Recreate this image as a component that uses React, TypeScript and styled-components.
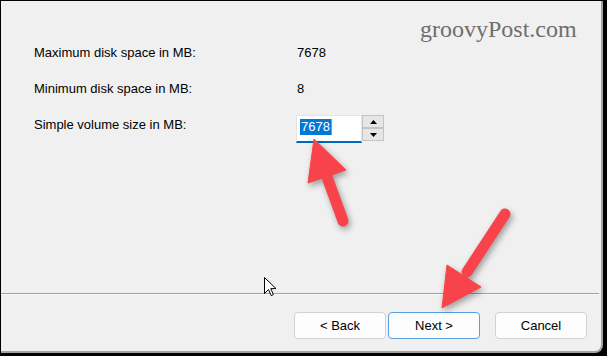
/* Partition wizard page: volume size step, with tutorial arrows on top */
import React from "react";
import styled, { createGlobalStyle } from "styled-components";

interface SizeRowProps {
  label: string;
  value: string;
}

const GlobalStyle = createGlobalStyle`
  html, body {
    margin: 0;
    padding: 0;
    background: #000;
  }
  body {
    font-family: "Liberation Sans", Arial, sans-serif;
  }
`;

const SizeRow: React.FC<SizeRowProps> = ({ label, value }) => (
  <Row>
    <Label>{label}</Label>
    <Value>{value}</Value>
  </Row>
);

const App: React.FC = () => {
  return (
    <Page>
      <GlobalStyle />
      <Dialog>
        <Watermark>groovyPost.com</Watermark>
        <Content>
          <SizeRow label="Maximum disk space in MB:" value="7678" />
          <SizeRow label="Minimum disk space in MB:" value="8" />
          <Row>
            <Label>Simple volume size in MB:</Label>
            <SpinField>
              <TextBox>
                <Selected>7678</Selected>
              </TextBox>
              <Spinner>
                <SpinButton>
                  <svg width="7" height="4" viewBox="0 0 7 4">
                    <path d="M0 4 L3.5 0 L7 4 Z" fill="#000" />
                  </svg>
                </SpinButton>
                <SpinButton>
                  <svg width="7" height="4" viewBox="0 0 7 4">
                    <path d="M0 0 L3.5 4 L7 0 Z" fill="#000" />
                  </svg>
                </SpinButton>
              </Spinner>
            </SpinField>
          </Row>
        </Content>
        <Separator />
        <Footer>
          <WizardButton>&lt; Back</WizardButton>
          <WizardButton primary>Next &gt;</WizardButton>
          <WizardButton gap={13}>Cancel</WizardButton>
        </Footer>
      </Dialog>

      {/* annotation arrows drawn over the screenshot */}
      <Annotations width="607" height="356" viewBox="0 0 607 356">
        <g fill="#f9434a" stroke="#f9434a">
          <line x1="343" y1="221" x2="327" y2="177" strokeWidth="11" strokeLinecap="round" />
          <polygon points="314,139 308,183 346,170" strokeWidth="1" strokeLinejoin="round" />
          <line x1="505" y1="214" x2="467" y2="272" strokeWidth="11" strokeLinecap="round" />
          <polygon points="442,308 447,265 481,287" strokeWidth="1" strokeLinejoin="round" />
        </g>
      </Annotations>

      <Cursor width="13" height="20" viewBox="0 0 13 20">
        <path
          d="M0.5 0.5 L0.5 16.5 L4.5 12.5 L7.2 18.6 L9.4 17.6 L6.8 11.6 L12 11.6 Z"
          fill="#fff"
          stroke="#000"
          strokeWidth="1"
          strokeLinejoin="miter"
        />
      </Cursor>
    </Page>
  );
};

const Page = styled.div`
  position: relative;
  width: 607px;
  height: 356px;
  overflow: hidden;
  background: #000;
`;

const Dialog = styled.div`
  position: relative;
  box-sizing: border-box;
  margin: 1px 0 0 1px;
  width: 602px;
  height: 352px;
  background: #f0f0f0;
  border-right: 2px solid #a3a3a3;
  border-bottom: 2px solid #a3a3a3;
  border-bottom-right-radius: 8px;
  display: flex;
  flex-direction: column;
`;

const Watermark = styled.div`
  position: absolute;
  top: 15px;
  left: 419px;
  font-family: "Liberation Serif", "Times New Roman", serif;
  font-size: 24px;
  color: #6e6e6e;
  white-space: nowrap;
`;

const Content = styled.div`
  box-sizing: border-box;
  height: 292px;
  padding: 44px 0 0 33px;
  display: flex;
  flex-direction: column;
  gap: 20px;
`;

const Row = styled.div`
  display: flex;
  align-items: flex-start;
  height: 16px;
  font-size: 13px;
  color: #000;
`;

const Label = styled.div`
  width: 262px;
  white-space: nowrap;
`;

const Value = styled.div`
  padding-left: 1px;
`;

const SpinField = styled.div`
  display: flex;
  margin-top: -2px;
`;

const TextBox = styled.div`
  box-sizing: border-box;
  width: 66px;
  height: 28px;
  background: #fff;
  border: 1px solid #e4e4e4;
  border-bottom: 2px solid #0067c0;
  padding: 3px 0 0 3px;
  display: flex;
  align-items: flex-start;
`;

const Selected = styled.span`
  background: #0078d7;
  color: #fff;
  padding: 1px 1px 1px 1px;
  font-size: 13px;
  line-height: 14px;
  border-right: 1px solid #e8862a;
`;

const Spinner = styled.div`
  display: flex;
  flex-direction: column;
  width: 22px;
  height: 26px;
  background: #fff;
`;

const SpinButton = styled.div`
  box-sizing: border-box;
  flex: 1;
  display: flex;
  align-items: center;
  justify-content: center;
  background: #e6e6e6;
  border: 1px solid #c4c4c4;
`;

const Separator = styled.div`
  height: 1px;
  margin-right: 2px;
  background: #a0a0a0;
  border-bottom: 1px solid #fafafa;
`;

const Footer = styled.div`
  display: flex;
  justify-content: flex-end;
  gap: 2px;
  padding: 17px 14px 0 0;
`;

const WizardButton = styled.button<{ primary?: boolean; gap?: number }>`
  box-sizing: border-box;
  width: 92px;
  height: 27px;
  margin-left: ${({ gap }) => gap ?? 0}px;
  font-family: "Liberation Sans", Arial, sans-serif;
  font-size: 13px;
  color: #000;
  background: #fdfdfd;
  border: 1px solid ${({ primary }) => (primary ? "#5a9fe4" : "#d2d2d2")};
  border-radius: 4px;
  padding: 0;
`;

const Annotations = styled.svg`
  position: absolute;
  top: 0;
  left: 0;
  pointer-events: none;
  filter: drop-shadow(2px 3px 3px rgba(0, 0, 0, 0.35));
`;

const Cursor = styled.svg`
  position: absolute;
  left: 264px;
  top: 277px;
  pointer-events: none;
`;

export default App;
